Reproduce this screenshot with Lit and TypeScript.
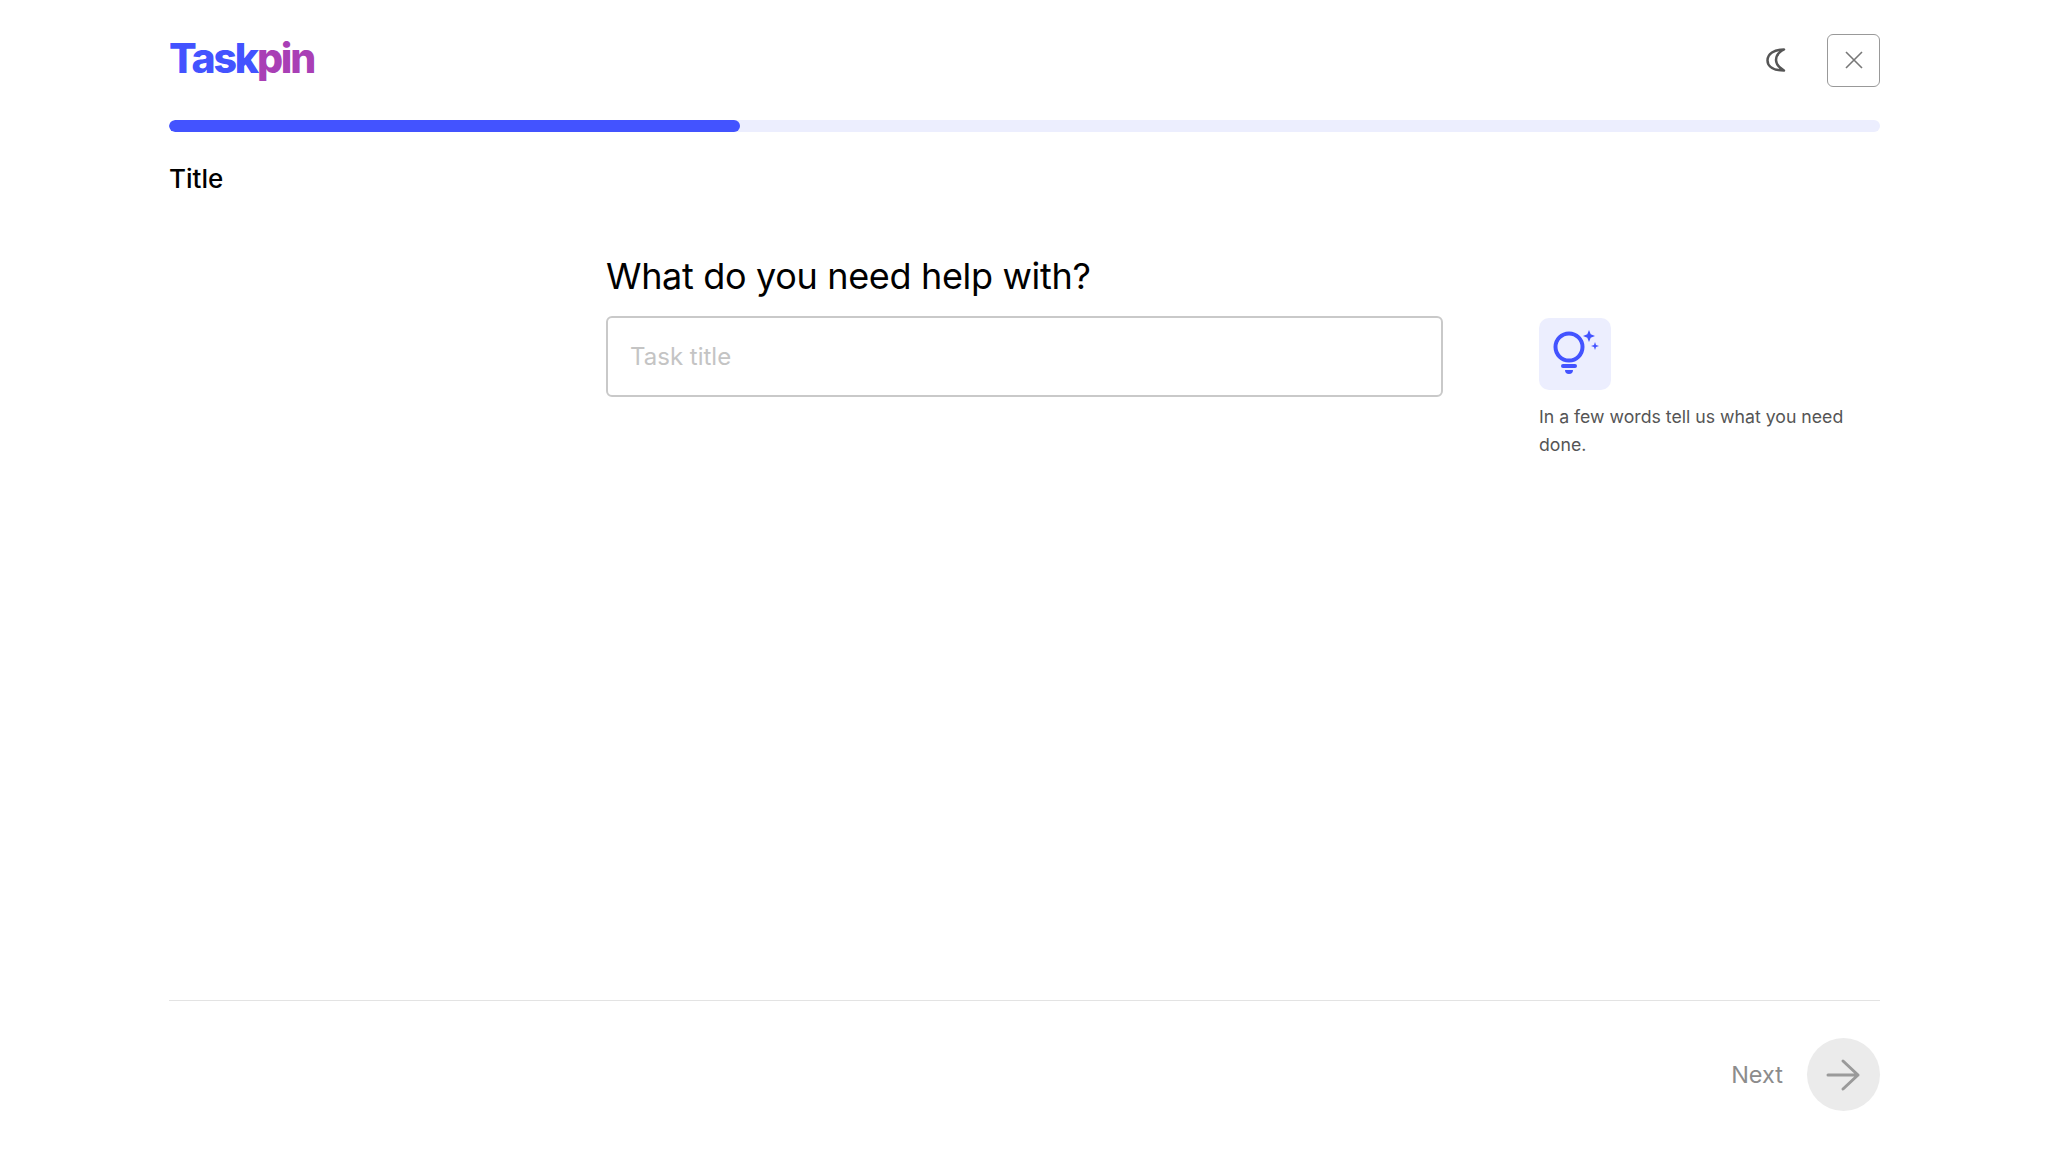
import { LitElement, html, css } from "lit";
import { customElement } from "lit/decorators.js";

@customElement("app-root")
export class AppRoot extends LitElement {
  static styles = css`
    :host { display: block; font-family: "Inter", "Liberation Sans", sans-serif; color: #000; background: #fff; }
    .page { height: 1152px; box-sizing: border-box; padding: 0 169px; display: flex; flex-direction: column; }
    .top { height: 120px; display: flex; align-items: center; justify-content: space-between; }
    .logo { font: 800 41px/1 "Inter", sans-serif; letter-spacing: -2.2px; margin-top: -3px; color: #4353ff; }
    .logo span { color: #a93fb5; }
    .actions { display: flex; align-items: center; gap: 37px; }
    .moon { display: block; }
    .close { width: 53px; height: 53px; box-sizing: border-box; border: 1.5px solid #999; border-radius: 6px; display: flex; align-items: center; justify-content: center; }
    .bar { height: 12px; background: #eceefe; border-radius: 6px; overflow: hidden; }
    .fill { width: 571px; height: 100%; background: #4353ff; border-radius: 6px; }
    .step { font-size: 26px; font-weight: 500; margin-top: 31px; line-height: 31px; }
    .main { flex: 1; display: flex; }
    .col { margin-left: 437px; width: 837px; padding-top: 60px; }
    h1 { margin: 0 0 18px; font-size: 36px; font-weight: 400; line-height: 44px; letter-spacing: -0.33px; }
    .input { height: 81px; box-sizing: border-box; border: 2px solid #c9c9c9; border-radius: 6px; padding: 0 22px; display: flex; align-items: center; color: #c4c4c4; font-size: 24px; }
    .tip { margin-left: 96px; width: 330px; padding-top: 124px; }
    .tipicon { width: 72px; height: 72px; border-radius: 10px; background: #eceefe; display: block; }
    .tip p { margin: 13px 0 0; font-size: 17.7px; line-height: 28px; color: #555; }
    .foot { height: 152px; box-sizing: border-box; padding-top: 37px; border-top: 1px solid #e3e3e3; display: flex; align-items: flex-start; justify-content: flex-end; gap: 24px; }
    .next { color: #8c8c8c; font-size: 23.5px; line-height: 73px; }
    .go { width: 73px; height: 73px; border-radius: 50%; background: #ebebeb; display: flex; align-items: center; justify-content: center; }
  `;
  render() {
    return html`<div class="page">
      <div class="top">
        <div class="logo">Task<span>pin</span></div>
        <div class="actions">
          <svg class="moon" width="28" height="28" viewBox="0 0 28 28" fill="none" stroke="#555" stroke-width="2.5" stroke-linejoin="round"><path d="M22 3.500C12 3.500 5.500 8 5.500 14.500C5.500 21 12 24.500 22 24.500C16 21 14 18 14 14C14 10 16 6.500 22 3.500z"/></svg>
          <div class="close"><svg width="20" height="20" viewBox="0 0 20 20" stroke="#777" stroke-width="1.6"><path d="M2 2l16 16M18 2L2 18"/></svg></div>
        </div>
      </div>
      <div class="bar"><div class="fill"></div></div>
      <div class="step">Title</div>
      <div class="main">
        <div class="col"><h1>What do you need help with?</h1><div class="input">Task title</div></div>
        <div class="tip">
          <svg class="tipicon" viewBox="0 0 72 72" fill="none"><circle cx="30" cy="29" r="13.500" stroke="#4353ff" stroke-width="4"/><path d="M24 48h12" stroke="#4353ff" stroke-width="4" stroke-linecap="round"/><path fill="#4353ff" d="M26 52h8a4 4 0 0 1-8 0zM50 12l1.700 4.300L56 18l-4.300 1.700L50 24l-1.700-4.300L44 18l4.300-1.700zM56 24l1 3 3 1-3 1-1 3-1-3-3-1 3-1z"/></svg>
          <p>In a few words tell us what you need done.</p>
        </div>
      </div>
      <div class="foot"><span class="next">Next</span><div class="go"><svg width="40" height="40" viewBox="0 0 40 40" fill="none" stroke="#9a9a9a" stroke-width="3" stroke-linecap="round" stroke-linejoin="round"><path d="M4 20h30M19 6l15 14-15 14"/></svg></div></div>
    </div>`;
  }
}
